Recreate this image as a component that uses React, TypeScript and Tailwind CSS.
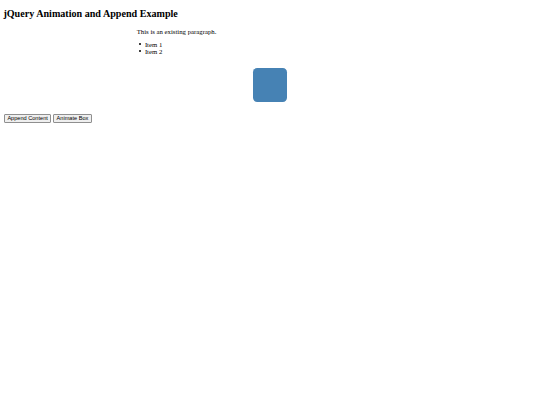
export default function App() {
  return (
    <div className="min-h-screen bg-white px-[3.4px] pt-px text-black" style={{ fontFamily: '"Liberation Serif", serif' }}>
      <h2 className="mt-[6.8px] mb-[8.7px] text-[10.1px] font-bold leading-[11.6px]">jQuery Animation and Append Example</h2>
      <div className="mx-auto w-1/2">
        <p className="mb-[5.6px] text-[6.75px] leading-[7px]">This is an existing paragraph.</p>
        <ul className="text-[6.75px] leading-[7px]">
          {["Item 1", "Item 2"].map((item) => (
            <li key={item} className="flex items-center gap-[4px] pl-[2px]">
              <span className="h-[2.2px] w-[2.2px] rounded-full bg-black" />
              {item}
            </li>
          ))}
        </ul>
        <div className="mx-auto mt-[13.4px] mb-[12.6px] h-[33.75px] w-[33.75px] rounded-[4.2px] bg-[#4682b4]" />
      </div>
      <div className="flex gap-[2px] pl-[0.6px]" style={{ fontFamily: '"Liberation Sans", Arial, sans-serif' }}>
        <button className="h-[9px] rounded-[1px] border border-[#8f8f8f] bg-[#efefef] px-[2.4px] text-[5.6px] leading-none">
          Append Content
        </button>
        <button className="h-[9px] rounded-[1px] border border-[#8f8f8f] bg-[#efefef] px-[2.4px] text-[5.6px] leading-none">
          Animate Box
        </button>
      </div>
    </div>
  );
}
